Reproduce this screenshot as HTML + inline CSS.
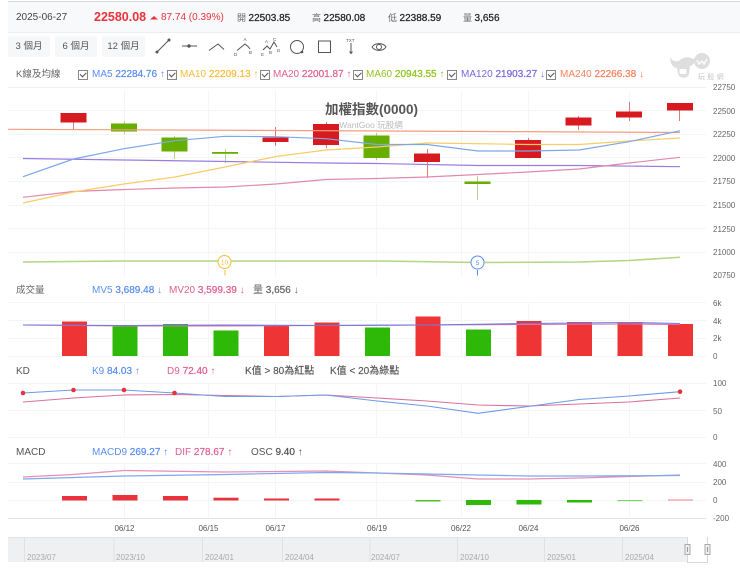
<!DOCTYPE html>
<html><head><meta charset="utf-8">
<style>
html,body{margin:0;padding:0;background:#fff}
#p{position:relative;width:740px;height:569px;overflow:hidden;background:#fff;font-family:"Liberation Sans","Noto Sans CJK TC",sans-serif;font-size:10px;color:#444;filter:blur(.3px)}
.t{position:absolute;white-space:nowrap;line-height:14px}
.b{font-weight:bold}
.s{-webkit-text-stroke:.25px currentColor}
.btn{position:absolute;top:36px;height:21px;line-height:21px;background:#f6f7f8;text-align:center;font-size:9.5px;color:#555;border-radius:2px}
.cb{position:absolute;top:70px;width:8px;height:8px;border:1px solid #888;background:#fff}
.cb:after{content:"";position:absolute;left:1px;top:1px;width:5px;height:2.5px;border-left:1px solid #555;border-bottom:1px solid #555;transform:rotate(-45deg)}
svg{position:absolute;left:0;top:0}
</style></head><body><div id="p">
<div style="position:absolute;left:8px;top:1px;width:732px;height:1px;background:#d8d8d8"></div>
<div style="position:absolute;left:8px;top:2px;width:732px;height:30px;background:#f8f9fa;border-bottom:1px solid #eceeef"></div>

<div class="t" style="left:16px;top:11px;font-size:10px;color:#444">2025-06-27</div>
<div class="t b" style="left:94px;top:10px;font-size:12.5px;color:#e8323c">22580.08</div>
<svg width="740" height="569" style="pointer-events:none">
<path d="M150 19.500l4-3.500 4 3.500z" fill="#e8323c"/>
</svg>
<div class="t" style="left:161px;top:11px;font-size:10px;color:#e8323c">87.74 (0.39%)</div>
<div class="t" style="left:237px;top:11px;font-size:9px;color:#666">開 <span class="s" style="font-size:10px;color:#222">22503.85</span></div>
<div class="t" style="left:312px;top:11px;font-size:9px;color:#666">高 <span class="s" style="font-size:10px;color:#222">22580.08</span></div>
<div class="t" style="left:388px;top:11px;font-size:9px;color:#666">低 <span class="s" style="font-size:10px;color:#222">22388.59</span></div>
<div class="t" style="left:463px;top:11px;font-size:9px;color:#666">量 <span class="s" style="font-size:10px;color:#222">3,656</span></div>

<div class="btn" style="left:8px;width:42px">3 個月</div>
<div class="btn" style="left:55px;width:42px">6 個月</div>
<div class="btn" style="left:102px;width:43px">12 個月</div>

<div class="t" style="left:16px;top:68px;color:#666;font-size:9.500px">K線及均線</div>
<div class="cb" style="left:78px"></div><div class="t" style="left:92px;top:68px;color:#5b8ff0">MA5 <span class="s">22284.76</span> ↑</div>
<div class="cb" style="left:167px"></div><div class="t" style="left:180px;top:68px;color:#f5bd3a">MA10 <span class="s">22209.13</span> ↑</div>
<div class="cb" style="left:260px"></div><div class="t" style="left:273px;top:68px;color:#e0608f">MA20 <span class="s">22001.87</span> ↑</div>
<div class="cb" style="left:353px"></div><div class="t" style="left:366px;top:68px;color:#8fc31f">MA60 <span class="s">20943.55</span> ↑</div>
<div class="cb" style="left:447px"></div><div class="t" style="left:461px;top:68px;color:#7b68e0">MA120 <span class="s">21903.27</span> ↓</div>
<div class="cb" style="left:546px"></div><div class="t" style="left:560px;top:68px;color:#f5825a">MA240 <span class="s">22266.38</span> ↓</div>

<svg width="740" height="569">
<!-- toolbar icons -->
<g fill="none" stroke="#555" stroke-width="1">
<path d="M157 52L169 40"/><circle cx="157" cy="52" r="1" fill="#555"/><circle cx="169" cy="40" r="1" fill="#555"/>
<path d="M182 46H197"/><circle cx="189" cy="46" r="1.200" fill="#555"/>
<path d="M209 50.500L218 44L224 49.500"/>
<path d="M237 50.500L245 44L248 46.500L250 49"/>
<path d="M263 50L267 46L270 49L274 42L277 47"/>
<circle cx="297" cy="47" r="6.500"/><circle cx="302" cy="52" r=".8" fill="#555"/>
<rect x="318.500" y="41" width="12" height="11.500"/>
<path d="M351 43V53"/><path d="M349.500 51.500L351 53.500L352.500 51.500"/>
<path d="M372 47C375 42.500 383 42.500 386 47C383 51.500 375 51.500 372 47Z"/><circle cx="379" cy="47" r="2.500"/>
</g>
<g font-family="Liberation Sans" font-size="4.500" fill="#555">
<text x="243.500" y="41">A</text><text x="234" y="56">D</text><text x="249" y="54">B</text>
<text x="265" y="43">A</text><text x="273" y="41">C</text><text x="261" y="56">E</text><text x="269" y="54">B</text><text x="277" y="52">D</text>
<text x="346" y="42">TXT</text>
</g>

<!-- logo -->
<g fill="#dedede">
<path d="M670 57c2 4 6 5 9 4 4-4 10-5 14-2l3-1c-1 5-3 7-6 8l-1 8c-1 5-9 5-11 0l-1-6c-4 0-7-5-7-11z"/>
<circle cx="702" cy="61" r="8"/>
</g>
<path d="M697 60l2 4 3-3 2 3 3-5" stroke="#fff" stroke-width="1.300" fill="none"/>
<rect x="679.500" y="69" width="7" height="5" rx="1" fill="#fff"/>
<text x="698" y="79" font-size="7" fill="#c8c8c8" font-family="Liberation Sans,Noto Sans CJK TC,sans-serif" letter-spacing="2.300">玩股網</text>

<!-- grids -->
<g stroke="#f4f5f6" stroke-width="1" fill="none">
<path d="M8 110.500H706M8 134.500H706M8 157.500H706M8 181.500H706M8 205.500H706M8 228.500H706M8 252.500H706"/>
<path d="M124.500 90V276M208.500 90V276M275.500 90V276M376.500 90V276M461.500 90V276M528.500 90V276M629.500 90V276"/>
<path d="M8 302.500H706M8 320.500H706M8 338.500H706M8 356.500H706"/>
<path d="M124.500 303V356M208.500 303V356M275.500 303V356M376.500 303V356M461.500 303V356M528.500 303V356M629.500 303V356"/>
<path d="M8 383.500H706M8 410.500H706M8 437.500H706"/>
<path d="M124.500 383V437M208.500 383V437M275.500 383V437M376.500 383V437M461.500 383V437M528.500 383V437M629.500 383V437"/>
<path d="M8 463.500H706M8 482.500H706M8 500.500H706"/>
<path d="M124.500 464V518M208.500 464V518M275.500 464V518M376.500 464V518M461.500 464V518M528.500 464V518M629.500 464V518"/>
</g>
<path d="M8 518.500H706" stroke="#e4e5e6"/>
<path d="M8 87.500H706" stroke="#f0f0f0"/>

<!-- title -->
<text x="371.500" y="114" text-anchor="middle" font-size="13.500" font-weight="bold" fill="#555" font-family="Liberation Sans,Noto Sans CJK TC,sans-serif">加權指數(0000)</text>
<text x="371" y="128" text-anchor="middle" font-size="8.500" fill="#bbb" font-family="Liberation Sans,Noto Sans CJK TC,sans-serif">WantGoo 玩股網</text>

<!-- wicks -->
<g stroke-width="1" opacity=".65">
<g stroke="#d9343a"><path d="M73.500 122V129M275.500 127V146M326.500 122V148M427.500 149V178M528.500 138V141M578.500 116V130M629.500 102V121M679.500 110V121"/></g>
<g stroke="#8fbb47"><path d="M124.500 121V134M174.500 136V159M225.500 149V163M376.500 133V160M477.500 176V200"/></g>
</g>
<!-- bodies -->
<g fill="#d71a1f">
<rect x="60.500" y="113" width="26" height="9.500"/>
<rect x="262.500" y="137.500" width="26" height="4.500"/>
<rect x="313" y="124" width="26" height="21"/>
<rect x="414" y="153.500" width="26" height="8.500"/>
<rect x="515" y="140" width="26" height="18"/>
<rect x="565.500" y="117.500" width="26" height="8"/>
<rect x="616" y="111.500" width="26" height="6"/>
<rect x="667" y="103" width="26" height="7.500"/>
</g>
<g fill="#66ae00">
<rect x="111" y="123.500" width="26" height="8"/>
<rect x="161.500" y="137.500" width="26" height="14"/>
<rect x="212" y="152" width="26" height="1.800"/>
<rect x="363.500" y="135.500" width="26" height="22.500"/>
<rect x="464.500" y="181.500" width="26" height="2.500"/>
</g>

<!-- MA lines -->
<g fill="none" stroke-width="1.200">
<polyline stroke="#f39b7f" points="8,129.300 280,130.500 680,132.500"/>
<polyline stroke="#9a7be0" points="23,158.500 124,160 225,161.500 326,163 377,163.500 478,165.500 579,165.500 680,166.700"/>
<polyline stroke="#e288ad" points="23,197.300 73.500,191.500 124,189.500 175,188 225,187 276,184 326,179.500 377,178.500 427,177 478,174.500 528,172 579,169 629,163 680,157.300"/>
<polyline stroke="#f8cc66" points="23,203 73.500,192 124,184 175,177 225,167 276,156.500 326,150 377,147 427,143 478,143.700 528,144.500 579,144.500 629,141 680,138"/>
<polyline stroke="#7ea7ea" points="23,176.700 73.500,159 124,148.700 175,140.700 225,136.300 276,136.700 326,138.700 377,144.500 427,144.500 478,151 528,151 579,150 629,141.700 680,130.700"/>
<polyline stroke="#b4d67e" stroke-width="1.500" points="23,262 124,261 225,261 377,261 478,262.500 579,262 629,260.500 680,257.300"/>
</g>
<!-- markers -->
<path d="M225 270V275.500" stroke="#f5bd3a" stroke-width="1"/>
<circle cx="224.500" cy="262" r="6.500" fill="#fff" stroke="#f5bd3a"/>
<text x="224.500" y="264.500" text-anchor="middle" font-size="6.500" fill="#f5bd3a" font-family="Liberation Sans">10</text>
<path d="M477.500 270V275.500" stroke="#5b8ff0" stroke-width="1"/>
<circle cx="477.500" cy="262.500" r="6.500" fill="#fff" stroke="#5b8ff0"/>
<text x="477.500" y="265" text-anchor="middle" font-size="6.500" fill="#5b8ff0" font-family="Liberation Sans">5</text>

<!-- axis labels -->
<g font-family="Liberation Sans" font-size="8" fill="#666">
<text x="713" y="90">22750</text><text x="713" y="114">22500</text><text x="713" y="137">22250</text><text x="713" y="161">22000</text><text x="713" y="184">21750</text><text x="713" y="208">21500</text><text x="713" y="232">21250</text><text x="713" y="255">21000</text><text x="713" y="278">20750</text>
<text x="713" y="306">6k</text><text x="713" y="324">4k</text><text x="713" y="341">2k</text><text x="713" y="359">0</text>
<text x="713" y="386">100</text><text x="713" y="414">50</text><text x="713" y="440">0</text>
<text x="713" y="467">400</text><text x="713" y="485">200</text><text x="713" y="503">0</text><text x="713" y="521">-200</text>
</g>

<!-- volume -->
<g fill="#ee3434">
<rect x="62" y="321.500" width="25" height="34.500"/>
<rect x="264" y="325" width="25" height="31"/>
<rect x="314.500" y="322.500" width="25" height="33.500"/>
<rect x="415.500" y="316.500" width="25" height="39.500"/>
<rect x="516.500" y="321" width="25" height="35"/>
<rect x="567" y="322" width="25" height="34"/>
<rect x="617.500" y="322" width="25" height="34"/>
<rect x="668" y="324" width="25" height="32"/>
</g>
<g fill="#2eb808">
<rect x="112.500" y="326.500" width="25" height="29.500"/>
<rect x="163" y="324" width="25" height="32"/>
<rect x="213.500" y="330.500" width="25" height="25.500"/>
<rect x="365" y="327.500" width="25" height="28.500"/>
<rect x="466" y="329.500" width="25" height="26.500"/>
</g>
<g fill="none" stroke-width="1.100">
<polyline stroke="#d874a8" points="23,325 124,326 225,326 326,325.500 427,325 528,324.500 629,324 680,324.500"/>
<polyline stroke="#6e78e0" points="23,325 124,325.500 225,325 326,325.500 427,325 528,323.500 629,322.500 680,323.500"/>
</g>

<!-- KD -->
<g fill="none" stroke-width="1.100">
<polyline stroke="#dd6f9b" points="23,402 73.500,398 124,395 175,394.500 225,395.500 276,396.500 326,395 377,398 427,401 478,405 528,406 579,404 629,402 680,398"/>
<polyline stroke="#6d9be8" points="23,393 73.500,390 124,390 174.500,393 225,396.500 276,396.500 326,395 377,401 427,406 478,413.300 528,406.500 579,399.500 629,396 680,391.700"/>
</g>
<g fill="#e8323c"><circle cx="23" cy="393" r="2.300"/><circle cx="73.500" cy="390" r="2.300"/><circle cx="124" cy="390" r="2.300"/><circle cx="174.500" cy="393" r="2.300"/><circle cx="680" cy="391.700" r="2.300"/></g>

<!-- MACD -->
<g fill="none" stroke-width="1.200">
<polyline stroke="#e68fb5" points="23,477 73,474.500 124,470.500 225,472 326,471 377,473 427,475 478,479 528,479 579,478 680,475"/>
<polyline stroke="#7ea7ea" points="23,479 124,476 225,474.500 326,472.500 377,473 427,474 478,475 528,476 579,476 680,475.500"/>
</g>
<g fill="#e8323c">
<rect x="62" y="496" width="25" height="4.500"/>
<rect x="112.500" y="495" width="25" height="5.500"/>
<rect x="163" y="496" width="25" height="4.500"/>
<rect x="213.500" y="497.700" width="25" height="2.800"/>
<rect x="264" y="498.500" width="25" height="2"/>
<rect x="314.500" y="498.500" width="25" height="2"/>
<rect x="668" y="499.500" width="25" height="1" opacity=".6"/>
</g>
<g fill="#2eb808">
<rect x="415.500" y="500" width="25" height="1.500" opacity=".85"/>
<rect x="466" y="500" width="25" height="5"/>
<rect x="516.500" y="500" width="25" height="4.500"/>
<rect x="567" y="500" width="25" height="2.500"/>
<rect x="617.500" y="500" width="25" height="1.200" opacity=".6"/>
</g>

<!-- date labels -->
<g font-family="Liberation Sans" font-size="8" fill="#555" text-anchor="middle">
<text x="124.500" y="531">06/12</text><text x="208.500" y="531">06/15</text><text x="275.500" y="531">06/17</text><text x="377" y="531">06/19</text><text x="461" y="531">06/22</text><text x="528.500" y="531">06/24</text><text x="629.500" y="531">06/26</text>
</g>

<!-- navigator -->
<rect x="8" y="537" width="679" height="25" fill="#eef0f1"/>
<path d="M8 537.500H687" stroke="#e2e4e5"/>
<path d="M24.500 538V562M114 538V562M202.500 538V562M282.500 538V562M370 538V562M457.500 538V562M544.500 538V562M622.500 538V562" stroke="#dfe1e2" fill="none"/>
<g font-family="Liberation Sans" font-size="8" fill="#aaa">
<text x="27" y="560">2023/07</text><text x="116" y="560">2023/10</text><text x="205" y="560">2024/01</text><text x="285" y="560">2024/04</text><text x="371" y="560">2024/07</text><text x="460" y="560">2024/10</text><text x="547" y="560">2025/01</text><text x="625" y="560">2025/04</text>
</g>
<path d="M687.500 537V562.500H707.500V537" fill="none" stroke="#d8d8d8"/>
<rect x="685" y="544.500" width="5" height="10" fill="#eee" stroke="#aaa"/>
<path d="M687.500 547V552" stroke="#999"/>
<rect x="705" y="544.500" width="5" height="10" fill="#eee" stroke="#aaa"/>
<path d="M707.500 547V552" stroke="#999"/>
</svg>

<div class="t" style="left:16px;top:282px;color:#666;font-size:9.500px;margin-top:2px">成交量</div>
<div class="t" style="left:92px;top:284px;color:#5b8ff0">MV5 <span class="s">3,689.48</span> ↓</div>
<div class="t" style="left:169px;top:284px;color:#e0608f">MV20 <span class="s">3,599.39</span> ↓</div>
<div class="t" style="left:253px;top:284px;color:#666">量 <span class="s">3,656</span> ↓</div>

<div class="t" style="left:16px;top:365px;color:#555">KD</div>
<div class="t" style="left:92px;top:365px;color:#5b8ff0">K9 <span class="s">84.03</span> ↑</div>
<div class="t" style="left:167px;top:365px;color:#e0608f">D9 <span class="s">72.40</span> ↑</div>
<div class="t" style="left:245px;top:365px;color:#555;-webkit-text-stroke:.15px #555">K值 &gt; 80為紅點</div>
<div class="t" style="left:330px;top:365px;color:#555;-webkit-text-stroke:.15px #555">K值 &lt; 20為綠點</div>

<div class="t" style="left:16px;top:446px;color:#555">MACD</div>
<div class="t" style="left:92px;top:446px;color:#5b8ff0">MACD9 <span class="s">269.27</span> ↑</div>
<div class="t" style="left:175px;top:446px;color:#e0608f">DIF <span class="s">278.67</span> ↑</div>
<div class="t" style="left:251px;top:446px;color:#555">OSC <span class="s">9.40</span> ↑</div>
</div></body></html>
